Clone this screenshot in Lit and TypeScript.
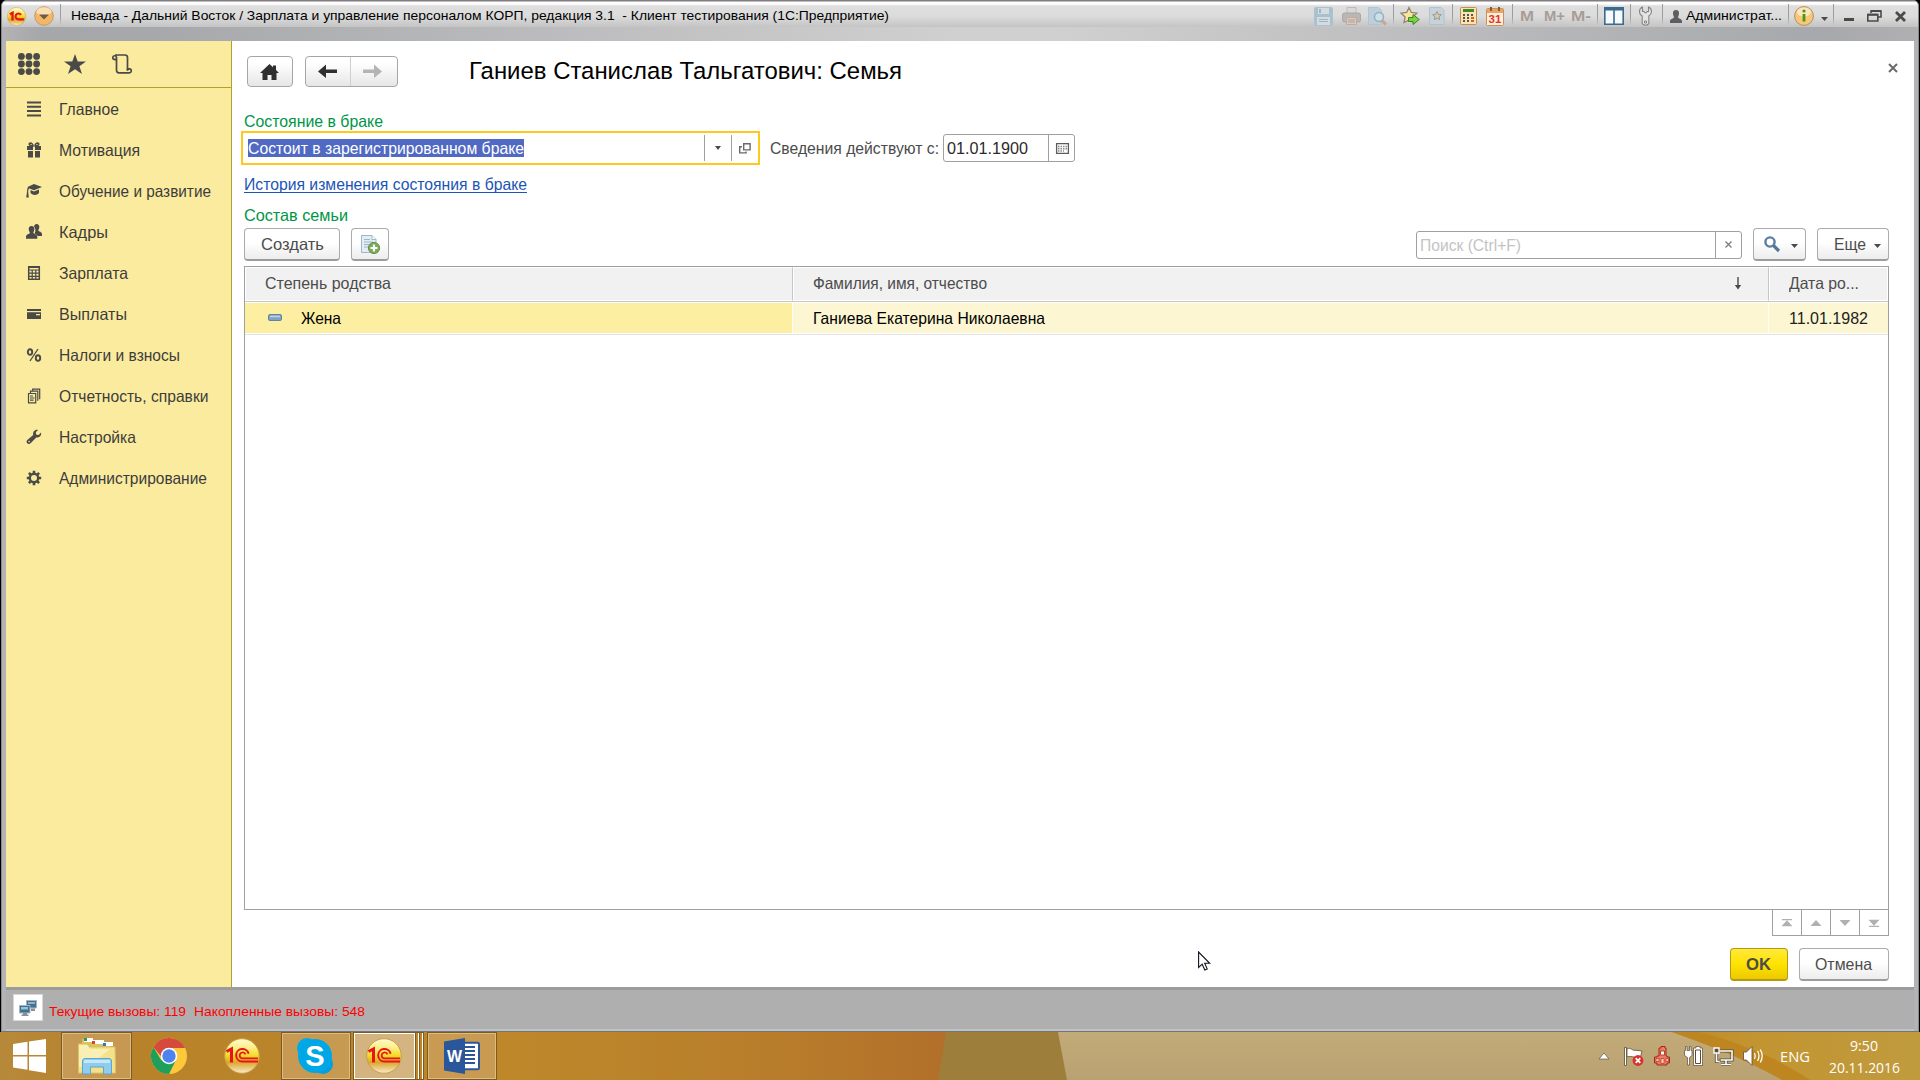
import { LitElement, html, css, svg } from "lit";
import { customElement, property } from "lit/decorators.js";

/* Text stretched or condensed horizontally to an exact width. */
@customElement("fit-text")
class FitText extends LitElement {
  @property({ type: Number }) w = 0;
  static styles = css`
    :host { display: inline-block; white-space: pre; flex: none; }
    span { display: inline-block; transform-origin: 0 50%; }
  `;
  render() {
    return html`<span><slot></slot></span>`;
  }
  firstUpdated() {
    const span = this.renderRoot.querySelector("span") as HTMLElement;
    const natural = span.getBoundingClientRect().width;
    this.style.width = `${this.w}px`;
    if (natural > 0) span.style.transform = `scaleX(${this.w / natural})`;
  }
}

const fit = (text: string, w: number, cls = "") =>
  html`<fit-text class=${cls} w=${w}>${text}</fit-text>`;

const icon = (w: number, h: number, body: unknown, cls = "") =>
  html`<svg class="ic ${cls}" width=${w} height=${h} viewBox="0 0 ${w} ${h}">${body}</svg>`;

const G = "#4a4a48";

const menu = [
  { t: "Главное", w: 60, i: svg`<path d="M1 1.500h14M1 5.800h14M1 10.100h14M1 14.400h14" stroke="${G}" stroke-width="2"/>` },
  { t: "Мотивация", w: 81, i: svg`<path fill="${G}" d="M1 4h6v4H1zM9 4h6v4H9zM2 9h5v6.500H2zM9 9h5v6.500H9z"/><path fill="none" stroke="${G}" stroke-width="1.600" d="M7 4C3 4 2.500 1.500 4 1.200S7 2 7 4zM9 4c4 0 4.500-2.500 3-2.800S9 2 9 4z"/>` },
  { t: "Обучение и развитие", w: 152, i: svg`<path fill="${G}" d="M8 1l8 3-8 3.200L3.500 5.500C2.500 6 2.200 7 2.200 9L2.800 14.500H.2L1 9c0-2 .3-3.500 1-4.500L1.500 4zM4.500 7l3.500 1.400L13 6.500V10c-2 2.600-6 2.600-8.500 0z"/>` },
  { t: "Кадры", w: 49, i: svg`<path fill="${G}" d="M10.500 0c2 0 3 1.500 2.800 3.300-.1 1.500-.8 2.400-1 3.200.5 1.200 3.700 1.300 3.700 3.500v2h-4.500C11 10.500 9 10 8.500 9.500 10 7.500 9.500 4 8 2.500 8.300 1 9.200 0 10.500 0z"/><path fill="${G}" d="M5.500 2c2.200 0 3 1.500 2.900 3.300-.1 1.500-.9 2.500-1.100 3.400.5 1.500 4 1.300 4 4.300v1.800H0V13c0-3 3.300-2.800 3.900-4.300-.3-.9-1.100-1.900-1.200-3.400C2.600 3.500 3.400 2 5.500 2z"/>` },
  { t: "Зарплата", w: 69, i: svg`<path fill="none" stroke="${G}" stroke-width="1.500" d="M2.700 1.700h10.600v12.600H2.700z"/><path stroke="${G}" stroke-width="1.200" d="M2.500 2.500h11M2.500 5h11M2.500 8.200h11M2.500 11.400h11M6.200 5v9M9.800 5v9"/>` },
  { t: "Выплаты", w: 68, i: svg`<path fill="${G}" d="M1 3h14v2H1zM1 6.300h14V13H1z"/><path fill="#fbeb9e" d="M10 8h4v1.300h-4z"/>` },
  { t: "Налоги и взносы", w: 121, i: svg`<g fill="none" stroke="${G}" stroke-width="1.900"><ellipse cx="4" cy="5" rx="2.200" ry="2.800"/><ellipse cx="12" cy="11" rx="2.200" ry="2.800"/><path stroke-width="1.300" d="M12 2L4 14"/></g>` },
  { t: "Отчетность, справки", w: 149.5, i: svg`<g fill="none" stroke="${G}" stroke-width="1.200"><path d="M2.500 5.500h7.200v9.300H2.500zM4.500 5.500V3.200h7.300v9.600M6.700 3.200V1.200h7v10"/><path d="M4 8h3M4 10h4.500M4 12.200h3.500"/></g>` },
  { t: "Настройка", w: 77, i: svg`<path fill="${G}" d="M15 3.600c.8 3-1.700 5.600-4.700 4.800L4.800 14c-1 1.200-2.600 1.200-3.600.3s-.8-2.500.4-3.500l5.600-4.900C6.500 2.900 9 .2 12 1L9.800 3.300l.5 2.400 2.400.4z"/><circle cx="3.100" cy="12.600" r=".8" fill="#fbeb9e"/>` },
  { t: "Администрирование", w: 148, i: svg`<circle cx="8" cy="8" r="4.200" fill="none" stroke="${G}" stroke-width="2.400"/><path stroke="${G}" stroke-width="2.600" d="M8 .8v2.400M8 12.800v2.400M.8 8h2.400M12.800 8h2.400M2.900 2.900l1.700 1.700M11.400 11.400l1.700 1.700M2.900 13.100l1.700-1.700M11.400 4.600l1.700-1.700"/>` },
];

const logo1c = (r: number, id: string) => {
  const d = r * 2;
  return html`<svg class="ic" width=${d} height=${d} viewBox="0 0 36 36">
    <defs>
      <linearGradient id="o${id}" x1="0" y1="0" x2="0" y2="1">
        <stop offset="0" stop-color="#fffbd0"/><stop offset=".25" stop-color="#fdf08a"/>
        <stop offset=".5" stop-color="#f6d820"/><stop offset=".68" stop-color="#dca62c"/><stop offset="1" stop-color="#fbeacb"/>
      </linearGradient>
    </defs>
    <circle cx="18" cy="18" r="17.300" fill="url(#o${id})" stroke="#c5a048" stroke-width="1"/>
    ${r < 12
      ? svg`<path d="M5.500 14L10.500 11v14.500" fill="none" stroke="#e8141c" stroke-width="4.500"/>
          <path fill="none" stroke="#e8141c" stroke-width="4" d="M26.500 15A5.600 5.600 0 1 0 21.500 23.500H32"/>`
      : svg`<path d="M2.500 13.500L7.500 11v13.500" fill="none" stroke="#e8141c" stroke-width="3"/>
          <g fill="none" stroke="#e8141c">
            <path stroke-width="2" d="M24.600 15.800A6.300 6.300 0 1 0 18.200 23.600H34"/>
            <path stroke-width="1.700" d="M21.500 16.400A3 3 0 1 0 18.200 20.400H34"/>
          </g>`}
  </svg>`;
};

const sep = html`<i class="sep"></i>`;

const saveI = icon(19, 19, svg`<rect x=".5" y=".5" width="18" height="18" rx="1" fill="#a9c0cf" stroke="#adc2d0"/><path fill="#d4dce1" d="M4 1h11v6H4zM3 10h13v8H3z"/><path fill="#9db5c5" d="M5 12h9v1H5zM5 14h9v1H5zM5 2h2v4H5z"/>`);
const printI = icon(19, 19, svg`<path fill="#d9d9d9" stroke="#bbb" d="M5 .5h9v6H5z"/><rect x=".5" y="6" width="18" height="9" rx="2" fill="#b9b7b5" stroke="#aaa8a6"/><path fill="#dcc9bc" stroke="#c3aa9b" d="M4.500 10.500h10v7h-10z"/><path stroke="#a5a5a5" d="M6 13h7M6 15h7"/>`);
const prevI = icon(20, 19, svg`<path fill="#bccfdc" stroke="#b2c4d0" d="M1.500.5h10l3 3v14h-13z"/><circle cx="12" cy="10" r="4.500" fill="#cfdfe8" stroke="#98aebb" stroke-width="1.500"/><path stroke="#c5a693" stroke-width="3" d="M15 13.500l4 4"/>`);
const starI = icon(20, 20, svg`<path fill="#fbe3a0" stroke="#8c8672" stroke-width="1.300" d="M9 1.500l2.300 5 5.500.7-4 3.800 1 5.500L9 14l-4.900 2.500 1-5.500-4-3.800 5.600-.7z"/><path fill="#7cd23e" stroke="#3a8824" d="M8.500 11.500h4.500V8.500l6.300 5-6.300 5v-3H8.500z"/>`);
const docStarI = icon(16, 18, svg`<path fill="#c6d3db" stroke="#b0c2ce" d="M.5.5H12l3 3v14H.5z"/><path fill="#d2c8b0" stroke="#a39b8b" d="M8 4.500l1.300 2.800 3 .4-2.200 2 .6 3L8 11.200l-2.700 1.500.6-3-2.200-2 3-.4z"/>`);
const calcI = icon(17, 18, svg`<rect x=".5" y=".5" width="16" height="17" rx="1" fill="#fbe4b0" stroke="#c68d55"/><path fill="#3d8a30" d="M3 2h11v3H3z"/><path fill="#555" d="M3 7h2v2H3zM7 7h2v2H7zM3 10h2v2H3zM7 10h2v2H7zM3 13h2v2H3zM7 13h2v2H7zM11 7h2v2h-2z"/><path fill="#d85c28" d="M11 10h3v2h-3zM11 13h3v2h-3z"/>`);
const calI = icon(18, 19, svg`<rect x=".5" y="1.500" width="17" height="17" rx="1" fill="#fdeedd" stroke="#cc9055"/><path fill="#e3a568" d="M1 2h16v4H1z"/><path stroke="#8d5a2e" stroke-width="2" d="M5 0v4M13 0v4"/><text x="9" y="16" text-anchor="middle" class="t31">31</text>`);
const panelI = icon(20, 18, svg`<path fill="#f6fafd" stroke="#3b6a8f" stroke-width="1.600" d="M.8.800h18.400v16.400H.8z"/><path fill="#3b6a8f" d="M0 0h20v3.500H0zM9.200 3h1.600v14H9.200z"/>`);
const wrenchI = icon(13, 20, svg`<path fill="#e4e4e2" stroke="#858585" stroke-width="1.100" d="M3.500 1v4.500h1.500L6 6.800h1.200L8.200 5.500h1.300V1c2 .8 3 2.400 3 4.500 0 2.200-1 3.500-2.700 4.500v5.300c.6 2.500-.9 3.900-3.300 3.900s-3.900-1.400-3.300-3.900V10C1.300 9 .5 7.700.5 5.500S1.500 1.800 3.500 1z"/><circle cx="6.500" cy="16" r="1.200" fill="none" stroke="#777"/>`);
const personI = icon(12, 13, svg`<path fill="#5e5e60" d="M6 0c2.300 0 3.200 1.700 3 3.800C8.900 5.300 8.200 6.300 8 7.200c.5 1.500 4 1.500 4 4V13H0v-1.800c0-2.500 3.500-2.500 4-4-.2-.9-.9-1.900-1-3.400C2.800 1.700 3.700 0 6 0z"/>`);
const infoI = icon(20, 20, svg`<circle cx="10" cy="10" r="9.400" fill="#f6c877" stroke="#b08f63"/><ellipse cx="10" cy="6" rx="7" ry="4.500" fill="#fce6bd"/><circle cx="10" cy="5" r="1.600" fill="#4f9414"/><path stroke="#4f9414" stroke-width="2.800" d="M10 8v7.500"/>`);
const tri = (c = "#4a4a4a", w = 7, h = 4) => icon(w, h, svg`<path fill=${c} d="M0 0h${w}L${w / 2} ${h}z"/>`);

@customElement("app-root")
class AppRoot extends LitElement {
  static styles = css`
    :host {
      display: block; width: 1920px; height: 1080px; overflow: hidden; position: relative;
      font-family: "Liberation Sans", Arial, sans-serif; font-size: 16.500px; color: #3d3d3d; line-height: 20px;
      background: #000;
    }
    * { box-sizing: border-box; }
    .ic { display: block; flex: none; overflow: visible; }
    .window { height: 1032px; display: flex; flex-direction: column; padding: 0 1px; }
    .frame { flex: 1; display: flex; flex-direction: column; background: #b3b3b5; border-left: 1px solid #8b8b8d; border-right: 1px solid #8b8b8d; border-bottom: 1px solid #70757b; border-radius: 6px 6px 0 0; }
    .title {
      height: 27px; flex: none; display: flex; align-items: center; padding: 5px 0 0 5px; font-size: 13.400px; line-height: 16px; color: #000;
      background: linear-gradient(#807c80 0 1px, #fff 2px 4px, #dedede 6px, #dcdcdc 16px, #c4c4c4 27px);
      border-radius: 6px 6px 0 0;
    }
    .name { margin-top: -1px; }
    .strip { height: 14px; flex: none; background: linear-gradient(90deg, #b3b3b5, #a6a7aa 2%, #a7a8ab 8%, #d0d0d0 50%, #d0d0d0 55%, #a7a8ab 95%, #b0b0b2); }
    .sep { width: 1px; height: 21px; background: linear-gradient(#9c9c9c, #9c9c9c 60%, #c5c5c5); flex: none; margin-top: -4px; }
    .grow { flex: 1; }
    .tools { display: flex; align-items: center; height: 22px; }
    .mem { font-size: 14.500px; font-weight: bold; color: #a89d96; }
    .t31 { font: bold 11.500px "Liberation Sans", sans-serif; fill: #e0352b; }
    .body { height: 946px; display: flex; margin: 0 4px; background: #fff; flex: none; }
    .side { width: 226px; background: #fbeb9e; border-right: 1px solid #b5a02c; flex: none; }
    .quick { height: 47px; border-bottom: 1px solid #b5a02c; display: flex; align-items: center; padding: 0 0 0 12px; }
    .quick .b { margin-left: 24px; } .quick .c { margin-left: 26px; }
    .item { height: 41px; display: flex; align-items: center; padding-left: 20px; }
    .item fit-text { margin-left: 17px; }
    .main { flex: 1; display: flex; flex-direction: column; }
    .head { display: flex; align-items: center; height: 31px; margin: 15px 16px 0 15px; }
    .btn {
      display: flex; align-items: center; justify-content: center; height: 33px; border: 1px solid #ababab; border-bottom: 2px solid #9c9c9c;
      border-radius: 4px; background: linear-gradient(#fff 45%, #ececec); flex: none; color: #4c4c4c;
    }
    .nav { height: 31px; border-bottom-width: 1px; background: linear-gradient(#fff 20%, #e6e6e6); border-color: #a6a6a6; }
    .home { width: 46px; padding-right: 1px; }
    .pair { width: 93px; margin-left: 12px; }
    .pair span { flex: 1; display: flex; justify-content: center; align-items: center; height: 29px; }
    .pair span + span { border-left: 1px solid #cfcfcf; padding-right: 3px; }
    .caption { font-size: 23.700px; line-height: 30px; color: #000; margin: -2px 0 0 71px; }
    .close { margin: -8px 0 0 auto; }
    .green { color: #009646; padding-left: 12px; height: 20px; line-height: 20px; }
    .g1 { margin-top: 24px; }
    .fields { display: flex; align-items: center; height: 34px; padding-left: 9px; }
    .combo { width: 519px; height: 34px; border: 2px solid #fcc91c; display: flex; align-items: center; padding-left: 5px; }
    .sel { background: #5069c3; color: #fff; height: 18px; line-height: 18px; }
    .combo .cell { width: 27px; height: 26px; border-left: 1px solid #a0a0a0; display: flex; align-items: center; justify-content: center; }
    .lbl { margin-left: 10px; color: #4c4c4c; }
    .date { width: 132px; height: 28px; border: 1px solid #a0a0a0; border-radius: 3px; display: flex; align-items: center; margin-left: 4px; padding-left: 3px; color: #2c2c2c; }
    .date .cell { margin-left: auto; width: 26px; height: 26px; border-left: 1px solid #a0a0a0; display: flex; align-items: center; justify-content: center; padding-left: 1px; }
    .linkrow { height: 18px; margin: 10px 0 0 12px; line-height: 18px; color: #1a55b5; display: flex; }
    .link { border-bottom: 1px solid #1a55b5; height: 18px; }
    .g2 { margin-top: 12px; }
    .bar { display: flex; align-items: center; height: 33px; margin: 3px 25px 0 12px; }
    .create { width: 96px; } .copy { width: 38px; margin-left: 11px; }
    .search { width: 326px; height: 28px; border: 1px solid #a0a0a0; border-radius: 3px; display: flex; align-items: center; color: #c3c3c3; padding-left: 3px; }
    .search .cell { margin-left: auto; width: 26px; height: 26px; border-left: 1px solid #a0a0a0; display: flex; align-items: center; justify-content: center; }
    .find { width: 53px; margin-left: 11px; padding-left: 2px; } .find .ic + .ic { margin-left: 11px; margin-top: 4px; }
    .more { width: 72px; margin-left: 11px; padding-left: 8px; } .more .ic { margin: 4px 0 0 8px; }
    .table { height: 644px; margin: 5px 25px 0 12px; border: 1px solid #a0a0a0; }
    .tr { display: grid; grid-template-columns: 548px 976px 1fr; }
    .th { height: 35px; border-bottom: 1px solid #c6c6c6; margin-bottom: 1px; }
    .th > div { background: #f1f1f1; border: 1px solid #fff; border-right: 1px solid #c6c6c6; display: flex; align-items: center; color: #4c4c4c; padding: 0 0 2px 19px; height: 34px; }
    .th > div:last-child { border-right-color: #fff; }
    .sort { margin: 0 26px 0 auto; }
    .row { height: 32px; border-bottom: 1px solid #e2e2e2; color: #000; }
    .row > div { background: #fcf7d2; display: flex; align-items: center; height: 30px; padding: 0 0 1px 20px; border-right: 1px solid #fffdf0; }
    .row > div.first { background: #fcefa2; padding-left: 23px; }
    .row > div:last-child { border-right: 0; color: #222; }
    .first fit-text.wife { margin-left: 18.500px; }
    .pager { display: flex; align-self: flex-end; height: 27px; margin: -1px 25px 0 0; border: 1px solid #a0a0a0; width: 117px; flex: none; }
    .pager span { flex: 1; display: flex; align-items: center; justify-content: center; }
    .pager span + span { border-left: 1px solid #a0a0a0; }
    .foot { display: flex; justify-content: flex-end; margin: 12px 25px 0 0; }
    .ok { width: 58px; background: linear-gradient(#ffe93e, #ffe300 50%, #ecc900); border-color: #b59a10; font-weight: bold; padding-right: 1px; }
    .cancel { width: 90px; margin-left: 11px; padding-right: 1px; }
    .status { flex: 1; margin: 0 4px; background: #afafaf; border-top: 3px solid #9c9c9c; display: flex; align-items: flex-start; color: #f00; font-size: 13.400px; line-height: 16px; border-bottom: 2px solid #bfc1c3; }
    .conn { width: 30px; height: 27px; background: #fff; border: 1px solid #d8d8d8; margin: 4px 0 0 7px; display: flex; align-items: center; justify-content: center; }
    .status fit-text { margin: 14px 0 0 5.500px; } .status fit-text + fit-text { margin-left: 8.500px; }
    .task { height: 48px; position: relative; display: flex; color: #fff; font-family: "Open Sans", "Noto Sans", sans-serif; font-size: 15px; line-height: 20px; }
    .wall { position: absolute; inset: 0; }
    .tb { position: relative; width: 71px; height: 48px; display: flex; align-items: center; justify-content: center; flex: none; }
    .on { border: 1px solid #7d5a20; box-shadow: inset 0 0 0 1px #dcbc85; background: rgba(215, 180, 130, .45); }
    .chrome { width: 74px; } .one { width: 72px; } .sk { width: 70px; margin-left: 3px; padding-right: 2px; } .wd { width: 70px; margin-left: 3px; padding-right: 1px; }
    .act { width: 63px; margin-left: 2px; padding-right: 1px; background: rgba(225, 205, 175, .65); box-shadow: inset 0 0 0 1px #fff; }
    .stack { width: 4px; height: 48px; border: 1px solid #7d5a20; border-left: 0; box-shadow: inset -1px 0 #fff; position: relative; flex: none; }
    .start { width: 61px; justify-content: flex-start; padding-left: 13px; }
    .tray { position: relative; margin-left: auto; display: flex; align-items: center; width: 321px; }
    .clock { display: flex; flex-direction: column; align-items: center; margin-left: 18px; width: 72px; line-height: 22px; }
    .word { font: bold 17px "Liberation Sans", sans-serif; fill: #fff; }
    .skype { font: bold 29px "Liberation Sans", sans-serif; fill: #fff; }
    .cursor { position: absolute; left: 1198px; top: 951px; }
    .m0 { margin-left: 0; } .m4 { margin-left: 4px; } .m5 { margin-left: 5px; } .m6 { margin-left: 6px; } .m7 { margin-left: 7px; }
    .m8 { margin-left: 8px; } .m9 { margin-left: 9px; } .m10 { margin-left: 10px; } .m13 { margin-left: 13px; }
    .m14 { margin-left: 14px; } .m15 { margin-left: 15px; } .m17 { margin-left: 17px; }
    .w { display: flex; }
    .drop { padding-top: 6px; }
    .end { width: 12px; }
  `;

  titleBar() {
    const g = (n: number, c: unknown) => html`<span class="w m${n}">${c}</span>`;
    return html`<div class="title">
      ${logo1c(9.5, "t")}
      ${g(8, icon(20, 20, svg`<circle cx="10" cy="10" r="9.300" fill="#f4b765" stroke="#bf9a6d"/><ellipse cx="10" cy="5.500" rx="7.500" ry="4.300" fill="#fbdfb4"/><path fill="#6d5b45" d="M5 8.500h10l-5 5z"/>`))}
      ${g(6, sep)}
      ${g(10, fit("Невада - Дальний Восток / Зарплата и управление персоналом КОРП, редакция 3.1  - Клиент тестирования (1С:Предприятие)", 818, "name"))}
      <span class="grow"></span>
      <div class="tools">
        ${saveI}${g(9, printI)}${g(6, prevI)}${g(6, sep)}${g(6, starI)}${g(9, docStarI)}${g(7, sep)}${g(7, calcI)}${g(9, calI)}${g(8, sep)}
        ${g(7, fit("M", 14, "mem"))}${g(10, fit("M+", 21, "mem"))}${g(6, fit("M-", 20, "mem"))}${g(6, sep)}${g(6, panelI)}${g(6, sep)}
        ${g(8, wrenchI)}${g(10, sep)}${g(7, personI)}${g(4, fit("Администрат...", 96, "name"))}${g(6, sep)}${g(5, infoI)}
        <span class="w m7 drop">${tri("#4a4a4a", 7, 4)}</span>${g(5, sep)}
        ${g(10, icon(10, 12, svg`<path fill="${G}" d="M0 8h10v3H0z"/>`))}
        ${g(13, icon(15, 12, svg`<path fill="none" stroke="${G}" stroke-width="1.600" d="M4 3V1h10v6h-3M.8 4.500h10V11H.8z"/><path stroke="${G}" stroke-width="2" d="M4 1h10M1 4.800h10"/>`))}
        ${g(13, icon(11, 11, svg`<path stroke="${G}" stroke-width="2.800" d="M1 1l9 9M10 1l-9 9"/>`))}
        <span class="end"></span>
      </div>
    </div>`;
  }

  side() {
    return html`<div class="side">
      <div class="quick">
        ${icon(22, 22, svg`<g fill="${G}">${[3.4, 11, 18.6].map((y) => [3.4, 11, 18.6].map((x) => svg`<circle cx=${x} cy=${y} r="3.400"/>`))}</g>`)}
        <span class="b">${icon(22, 20, svg`<path fill="${G}" d="M11 0l2.700 7.500H22l-6.600 4.800L18 20l-7-4.800L4 20l2.600-7.700L0 7.500h8.300z"/>`)}</span>
        <span class="c">${icon(20, 20, svg`<g fill="none" stroke="${G}" stroke-width="1.700"><path d="M4.500 5.500H2.300A1.900 1.900 0 1 1 4.500 3.300V16c0 2 .8 2.800 2.500 2.800h10.500A2 2 0 1 0 15.500 16V3.500C15.500 1.700 14.600 1 13 1H3"/><path d="M15.500 14.800v2M2 5.500h2.500"/></g>`)}</span>
      </div>
      <div class="menu">${menu.map((m) => html`<div class="item">${icon(16, 16, m.i)}${fit(m.t, m.w)}</div>`)}</div>
    </div>`;
  }

  main() {
    const arrow = (c: string, flip: boolean) => icon(19, 15, svg`<path fill=${c} transform=${flip ? "translate(19 0) scale(-1 1)" : ""} d="M0 7.500L8 .5V5.500h11v3.600H8v5z"/>`);
    const pg = (d: string) => html`<span>${icon(12, 8, svg`<path fill="#b0b0b0" d=${d}/>`)}</span>`;
    return html`<div class="main">
      <div class="head">
        <div class="btn nav home">${icon(19, 16, svg`<path fill="#2f2f2f" d="M9.500 0L13 3.300V1.500h3v4.600L19 9h-2.500v7h-5v-5h-4v5h-5V9H0z"/>`)}</div>
        <div class="btn nav pair"><span>${arrow("#2f2f2f", false)}</span><span>${arrow("#b4b4b4", true)}</span></div>
        ${fit("Ганиев Станислав Тальгатович: Семья", 433, "caption")}
        <span class="close">${icon(10, 10, svg`<path stroke="#6c6c6c" stroke-width="2" d="M1 1l8 8M9 1L1 9"/>`)}</span>
      </div>
      <div class="green g1">${fit("Состояние в браке", 139)}</div>
      <div class="fields">
        <div class="combo">
          ${fit("Состоит в зарегистрированном браке", 276, "sel")}
          <span class="grow"></span>
          <span class="cell">${tri("#4a4a4a", 6, 4)}</span>
          <span class="cell">${icon(12, 11, svg`<path fill="none" stroke="#6a6a6a" stroke-width="1.400" d="M4.700.7h6.400v6.200H4.700zM3 3.700H.7v6.200h6.400V8.500"/>`)}</span>
        </div>
        ${fit("Сведения действуют с:", 169, "lbl")}
        <div class="date">${fit("01.01.1900", 81)}<span class="cell">${icon(13, 11, svg`<path fill="#fff" stroke="#5c5c5c" stroke-width="1.300" d="M.6.600h11.800v9.800H.6z"/><path stroke="#8b8b8b" stroke-width="1.500" stroke-dasharray="1.500 1" d="M2 3.500h9M2 5.700h9M2 8h6"/>`)}</span></div>
      </div>
      <div class="linkrow">${fit("История изменения состояния в браке", 283, "link")}</div>
      <div class="green g2">${fit("Состав семьи", 104)}</div>
      <div class="bar">
        <div class="btn create">${fit("Создать", 63)}</div>
        <div class="btn copy">${icon(19, 19, svg`<path fill="#e2edf4" stroke="#9db7c9" d="M.5.500H11l4 4v13H.5z"/><path fill="#fff" stroke="#9db7c9" d="M11 .500v4h4"/><path stroke="#9bb6c9" d="M3 4.500h6M3 7h9M3 9.500h8M3 12h6"/><circle cx="13" cy="13" r="5.600" fill="#77ad54" stroke="#6b8f55"/><path stroke="#fff" stroke-width="2.200" d="M13 9.500v7M9.500 13h7"/>`)}</div>
        <span class="grow"></span>
        <div class="search">${fit("Поиск (Ctrl+F)", 101)}<span class="cell">${icon(7, 7, svg`<path stroke="#7c7c7c" stroke-width="1.300" d="M.5.500l6 6M6.500.500l-6 6"/>`)}</span></div>
        <div class="btn find">${icon(16, 16, svg`<circle cx="6" cy="6" r="4.600" fill="#fff" stroke="#5b7da0" stroke-width="2.400"/><path stroke="#54789c" stroke-width="3.200" d="M9.500 9.500l5.500 5.500"/>`)}${tri("#4a4a4a", 7, 4)}</div>
        <div class="btn more">${fit("Еще", 32)}${tri("#4a4a4a", 7, 4)}</div>
      </div>
      <div class="table">
        <div class="tr th">
          <div>${fit("Степень родства", 126)}</div>
          <div>${fit("Фамилия, имя, отчество", 174)}<span class="sort">${icon(8, 13, svg`<path stroke="#4a4a4a" stroke-width="1.400" d="M4 0v10"/><path fill="#4a4a4a" d="M.8 8h6.400L4 12.500z"/>`)}</span></div>
          <div>${fit("Дата ро...", 70)}</div>
        </div>
        <div class="tr row">
          <div class="first">${icon(14, 7, svg`<rect x=".5" y=".5" width="13" height="6" rx="1.500" fill="#7fa3c0" stroke="#64839f"/><path stroke="#bcd3e3" stroke-width="1.600" d="M2 2.500h10"/>`)}${fit("Жена", 40, "wife")}</div>
          <div>${fit("Ганиева Екатерина Николаевна", 232)}</div>
          <div>${fit("11.01.1982", 79)}</div>
        </div>
      </div>
      <div class="pager">
        ${pg("M1 0h10v1.300H1zM6 1.300l5.500 6H.5z")}${pg("M6 1l5.500 6H.5z")}${pg("M6 7l5.500-6H.5z")}${pg("M1 6.700h10V8H1zM6 6.700l5.500-6H.5z")}
      </div>
      <div class="foot"><div class="btn ok">${fit("OK", 25)}</div><div class="btn cancel">${fit("Отмена", 57)}</div></div>
    </div>`;
  }

  task() {
    return html`<div class="task">
      <svg class="wall" width="1920" height="48" viewBox="0 0 1920 48">
        <defs>
          <linearGradient id="wa"><stop offset="0" stop-color="#b6893a"/><stop offset=".12" stop-color="#b8822a"/><stop offset=".55" stop-color="#bd872a"/><stop offset=".82" stop-color="#b87d2b"/><stop offset="1" stop-color="#b26f2a"/></linearGradient>
          <linearGradient id="wb" x1="0" y1="0" x2="0" y2="1"><stop offset="0" stop-color="#c2ab78"/><stop offset="1" stop-color="#b9a172"/></linearGradient>
          <linearGradient id="wc"><stop offset="0" stop-color="#c08a22"/><stop offset=".3" stop-color="#c2942f"/><stop offset="1" stop-color="#c09b3e"/></linearGradient>
        </defs>
        <rect width="950" height="48" fill="url(#wa)"/>
        <path fill="#9e7e3b" d="M946 0h120l8 48H938z"/>
        <path fill="url(#wb)" d="M1058 0h862v48h-853z"/>
        <path fill="url(#wc)" d="M1672 0h248v48h-138c-35-20-70-34-110-48z"/>
        <path fill="#be8620" d="M1672 0h28c50 14 80 28 110 48h-28c-35-20-70-34-110-48z"/>
      </svg>
      <div class="tb start">${icon(33, 34, svg`<path fill="#fff" d="M0 5l14.500-2.200V16H0zM16 2.500L33 0v16H16zM0 17.500h14.500v13.200L0 28.500zM16 17.500h17V34l-17-2.800z"/>`)}</div>
      <div class="tb on">${icon(38, 38, svg`<path fill="#d9c15b" d="M4 2l10-1 2 4h17v20H4z"/><path fill="#fff" d="M6 1h9v4H6zM14 3h12v4H14zM25 5h10v4H25z"/><path fill="#2f9a52" d="M6 1h3v3H6z"/><path fill="#d9442e" d="M14 4h3v3h-3z"/><path fill="#2d78c0" d="M25 6h3v3h-3z"/><path fill="#f3e18b" stroke="#d9c468" d="M.5 7h9l2 3H37l.5 26H.5z"/><path fill="#f9efb4" d="M1 8h8l3 4h20L10 30H1z"/><path fill="#8fcdec" stroke="#5fa5cf" d="M4.500 37V24c0-1.500 1-2.500 2.500-2.500h24c1.500 0 2.500 1 2.500 2.500v13h-8v-7h-13v7z"/><path fill="#c5e7f7" d="M6 23h26v3H6z"/>`)}</div>
      <div class="tb chrome">${icon(38, 38, svg`<circle cx="19" cy="19" r="18" fill="#fdc93a"/><path fill="#1f9f5c" d="M3.400 10l8 13.500L19 19l6.500 5L19 37A18 18 0 0 1 3.400 10z"/><path fill="#d64a3e" d="M3.400 10A18 18 0 0 1 35.200 11H19l-7.500 9z"/><circle cx="19" cy="19" r="8.300" fill="#fff"/><circle cx="19" cy="19" r="6.700" fill="#4c83ee"/>`)}</div>
      <div class="tb one">${logo1c(18, "a")}</div>
      <div class="tb on sk">${icon(36, 36, svg`<circle cx="10" cy="10" r="10" fill="#00a9ea"/><circle cx="26" cy="26" r="10" fill="#009fdf"/><circle cx="18" cy="18" r="17" fill="#00a7e7"/><text class="skype" x="18" y="28.300" text-anchor="middle">S</text>`)}</div>
      <div class="tb on act">${logo1c(18, "b")}</div><i class="stack"></i><i class="stack"></i>
      <div class="tb on wd">${icon(36, 36, svg`<path fill="#fff" stroke="#2b579a" stroke-width="2" d="M18 4.800h15.500c1 0 1.500.5 1.500 1.500v23.500c0 1-.5 1.500-1.500 1.500H18z"/><path stroke="#2b579a" stroke-width="1.800" d="M20 9h11M20 13h11M20 17h11M20 21h11M20 25h11"/><path fill="#2b579a" d="M0 3.500L21 0v36L0 32.500z"/><text class="word" x="3" y="24" textLength="15" lengthAdjust="spacingAndGlyphs">W</text>`)}</div>
      <div class="tray">
        <span class="w m0">${icon(10, 6, svg`<path fill="#fff" stroke="#5f5645" stroke-width=".7" d="M5 0l5 6H0z"/>`)}</span>
        <span class="w m15">${icon(20, 19, svg`<path fill="#fff" stroke="#5a4c36" stroke-width=".8" d="M.5.5h2v18h-2zM3 2c4-2.500 5 2.500 9 1.200l6 .8-1.500 6C12 12 8 8 3 10z"/><circle cx="14" cy="13.500" r="5.400" fill="#d8322c"/><path stroke="#fff" stroke-width="1.800" d="M11.700 11.200l4.600 4.600M16.300 11.200l-4.600 4.600"/>`)}</span>
        <span class="w m10">${icon(16, 20, svg`<path fill="#f07a62" stroke="#a22a17" d="M5 2h2V.5h4V2h1v8h1v1h2.500v6H13v2H3v-2H.5v-6H3v-1h2z"/><path fill="#fff" stroke="#a22a17" stroke-width=".8" d="M6.500 5h4v4h-4z"/><path fill="#fbc6b7" stroke="#a22a17" stroke-width=".6" d="M2 12.500h3v3H2zM7 12.500h3v5H7zM12 12.500h2.500v3H12z"/>`)}</span>
        <span class="w m14">${icon(19, 20, svg`<g stroke="#5a4c36" stroke-width=".7"><path fill="#fff" d="M1.500.500h1.500v4h2.500v-4H7v4h1v5L5.500 11.500V19H3.500v-7.500L.5 9.500v-5h1z"/><path fill="#fff" d="M12 .500h4V2h2.500v17.500h-9V2H12z"/></g><path fill="none" stroke="#5a4c36" d="M11.500 4h5v13.500h-5z"/>`)}</span>
        <span class="w m10">${icon(20, 19, svg`<g fill="none" stroke="#5a4c36" stroke-width="3.200"><path d="M7 4h12v9H6.500M13 13v4M8 17.500h10M3.500 6v8.500H6"/></g><g fill="none" stroke="#fff" stroke-width="1.600"><path d="M7 4h12v9H7.500M13 13v4M8 17.500h10M3.500 6v8.500H6.500"/></g><path fill="#5a4c36" stroke="#fff" stroke-width="1.300" d="M1 1h5v5H1z"/>`)}</span>
        <span class="w m10">${icon(20, 20, svg`<path fill="#fff" stroke="#5a4c36" stroke-width=".8" d="M.5 6H3.500L9 .5v19L3.500 14H.5z"/><path fill="none" stroke="#fff" stroke-width="1.300" d="M11.500 7q1.500 3 0 6M14.500 5q3 5 0 10M17.200 3.500q4 6.500 0 13"/>`)}</span>
        <span class="w m17">${fit("ENG", 30)}</span>
        <div class="clock">${fit("9:50", 28)}${fit("20.11.2016", 71)}</div>
      </div>
    </div>`;
  }

  render() {
    return html`
      <div class="window"><div class="frame">
        ${this.titleBar()}
        <div class="strip"></div>
        <div class="body">${this.side()}${this.main()}</div>
        <div class="status">
          <div class="conn">${icon(18, 16, svg`<path fill="#3f7296" stroke="#a9b6bf" d="M7.500.500h10v7.500h-10z"/><path fill="#8fb4cd" d="M9 2h7v2H9z"/><path fill="#3f7296" stroke="#a9b6bf" d="M.5 5.500h10.500v7.500H.5z"/><path fill="#9fc0d5" d="M2 7h7v2.500H2z"/><path fill="#8a8f93" d="M4 13h4v1.500H4zM2.500 14.500h7V16h-7zM12 8.500h4V11h-4z"/>`)}</div>
          ${fit("Текущие вызовы: 119", 137)}${fit("Накопленные вызовы: 548", 171)}
        </div>
      </div></div>
      ${this.task()}
      <svg class="cursor" width="13" height="21" viewBox="0 0 13 21"><path fill="#fff" stroke="#111122" stroke-width="1.100" d="M.6 1v15.500l3.600-3.300 2.600 5.800 2.400-1.100-2.500-5.600h5z"/></svg>
    `;
  }
}
